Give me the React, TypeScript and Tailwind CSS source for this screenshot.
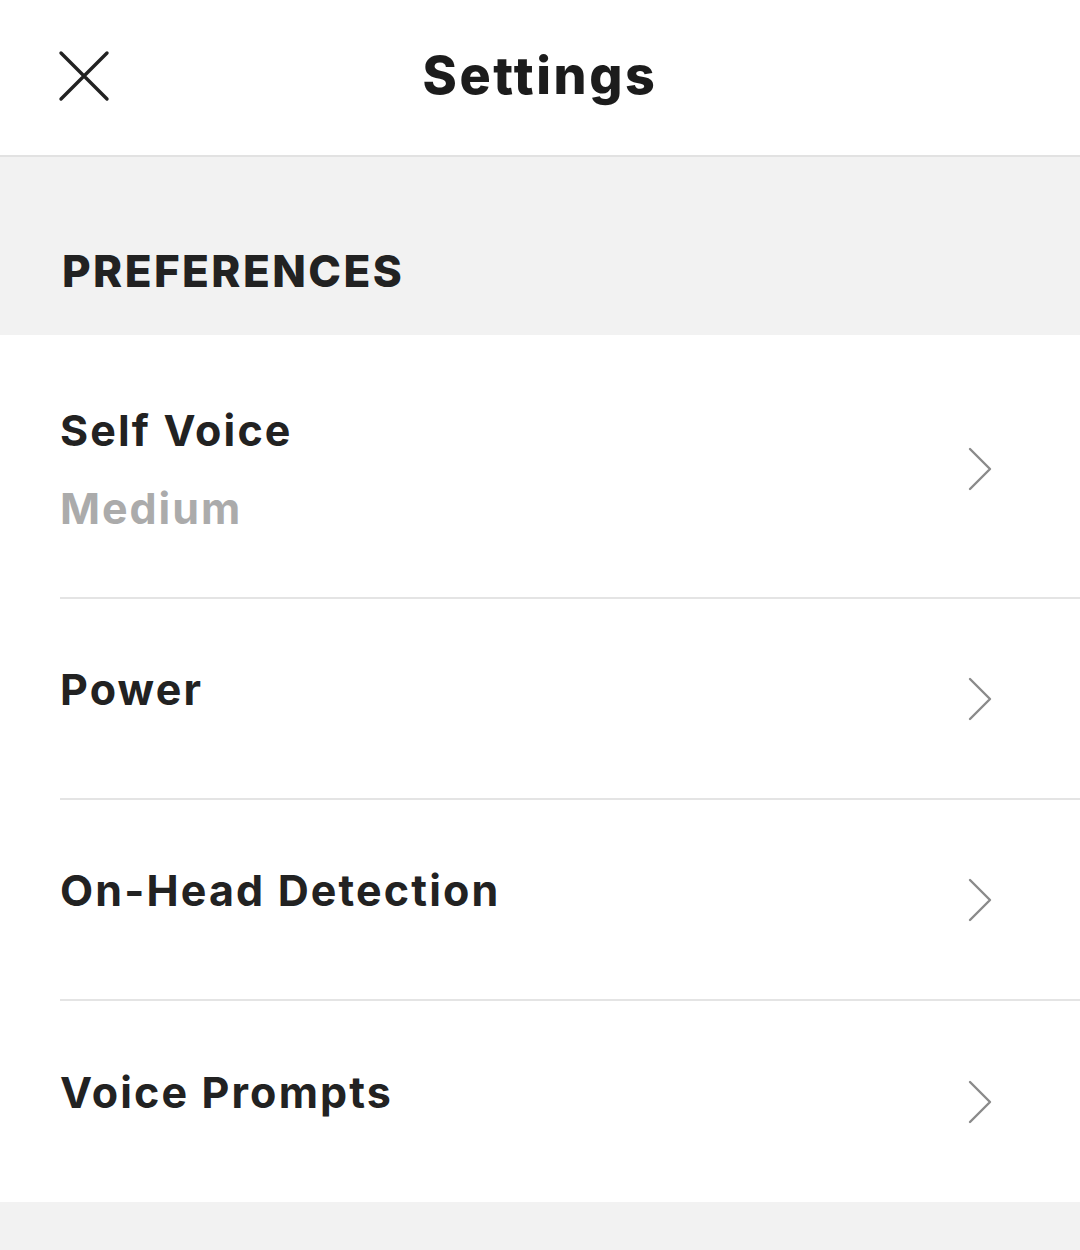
import React from "react";

const Chevron = ({ offset }: { offset?: boolean }) => (
  <svg width="28" height="44" viewBox="0 0 28 44" fill="none" className={`shrink-0 ${offset ? "mt-[5px]" : "mt-[1px]"}`}>
    <path d="M4 2 L24 22 L4 42" stroke="#8a8a8a" strokeWidth="2.4" strokeLinecap="round" strokeLinejoin="round" />
  </svg>
);

const Row = ({ title, sub, last }: { title: string; sub?: string; last?: boolean }) => (
  <div className={`ml-[60px] flex items-center justify-between pr-[86px] ${last ? "" : "border-b-2 border-[#e4e4e4]"} ${sub ? "h-[264px]" : "h-[201px]"}`}>
    <div className={`flex flex-col ${sub ? "mt-[6px]" : "mb-[18px]"}`}>
      <div className="text-[43px] font-bold leading-none tracking-[0.05em] text-[#222]">{title}</div>
      {sub && <div className="mt-[35px] text-[43px] font-bold leading-none tracking-[0.045em] text-[#ababab]">{sub}</div>}
    </div>
    <Chevron offset={!!sub} />
  </div>
);

export default function App() {
  return (
    <div className="w-[1080px] h-[1250px] bg-[#f2f2f2] flex flex-col" style={{ fontFamily: "Inter, 'Noto Sans', sans-serif" }}>
      <div className="h-[157px] shrink-0 bg-white border-b-2 border-[#e2e2e2] relative flex items-center justify-center">
        <svg className="absolute left-[58px] top-[50px]" width="52" height="52" viewBox="0 0 52 52" fill="none">
          <path d="M3 3 L49 49 M49 3 L3 49" stroke="#222" strokeWidth="3.4" strokeLinecap="round" />
        </svg>
        <div className="text-[52px] font-extrabold text-[#1c1c1c] leading-none mb-[4px] tracking-[0.05em]">Settings</div>
      </div>
      <div className="h-[178px] shrink-0 bg-[#f2f2f2] flex items-start px-[62px] pt-[92px]">
        <div className="text-[44px] font-extrabold leading-none text-[#222] tracking-[0.055em]">PREFERENCES</div>
      </div>
      <div className="bg-white shrink-0">
        <Row title="Self Voice" sub="Medium" />
        <Row title="Power" />
        <Row title="On-Head Detection" />
        <Row title="Voice Prompts" last />
      </div>
    </div>
  );
}
